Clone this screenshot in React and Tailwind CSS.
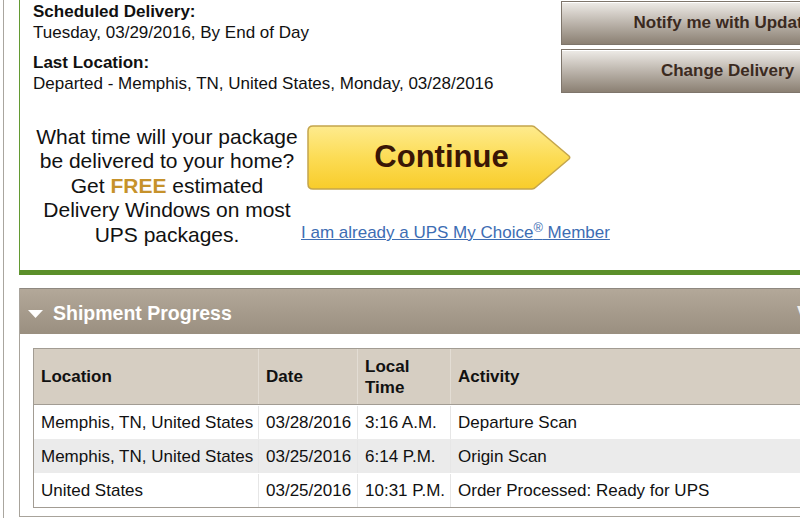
import React from 'react';

const rows = [
    { location: 'Memphis, TN, United States', date: '03/28/2016', time: '3:16 A.M.', activity: 'Departure Scan' },
    { location: 'Memphis, TN, United States', date: '03/25/2016', time: '6:14 P.M.', activity: 'Origin Scan' },
    { location: 'United States', date: '03/25/2016', time: '10:31 P.M.', activity: 'Order Processed: Ready for UPS' },
];

const GrayButton = ({ children }) => (
    <button className="h-[44px] w-full border border-[#7e756b] bg-linear-to-b from-[#efece8] to-[#8b8073] shadow-[inset_0_1px_0_#ffffff] text-[17px] font-bold text-[#3b2a1f] flex items-center justify-center">
        {children}
    </button>
);

const ContinueButton = () => (
    <div className="relative ml-[6px] w-[264px] h-[65px]">
        <svg className="absolute inset-0" width="264" height="65" viewBox="0 0 264 65">
            <defs>
                <linearGradient id="cont" x1="0" y1="0" x2="0" y2="1">
                    <stop offset="0" stopColor="#feeb8e" />
                    <stop offset="0.5" stopColor="#fcdc55" />
                    <stop offset="1" stopColor="#f8cc2a" />
                </linearGradient>
            </defs>
            <path
                d="M6 1 H225 Q227 1 229 3 L262 31 Q263.5 32.5 262 34 L229 62 Q227 64 225 64 H6 Q1 64 1 59 V6 Q1 1 6 1 Z"
                fill="url(#cont)"
                stroke="#c4a54c"
                strokeWidth="1.5"
            />
        </svg>
        <div className="absolute inset-0 flex items-center justify-center pl-[5px] text-[31px] font-bold text-[#3a1606]">
            Continue
        </div>
    </div>
);

export default function App() {
    return (
        <div className="w-[800px] h-[518px] overflow-hidden bg-white text-[#111] font-['Liberation_Sans',Arial,sans-serif]">
            <div className="ml-[3px] h-full w-[1000px] border-l border-[#aaa69f] pl-[15px]">
                {/* Tracking summary */}
                <div className="w-[900px] border-l border-[#639a33] border-b-[5px] border-b-[#5b8f2a] pl-[13px] pt-[1px] pb-[23px]">
                    <div className="flex items-start">
                        <div className="w-[528px] text-[17px] leading-[21px]">
                            <div className="font-bold">Scheduled Delivery:</div>
                            <div>Tuesday, 03/29/2016, By End of Day</div>
                            <div className="mt-[9px] font-bold">Last Location:</div>
                            <div>Departed - Memphis, TN, United States, Monday, 03/28/2016</div>
                        </div>
                        <div className="w-[333px] flex flex-col gap-[4px]">
                            <GrayButton>Notify me with Updates</GrayButton>
                            <GrayButton>Change Delivery</GrayButton>
                        </div>
                    </div>

                    <div className="mt-[31px] flex items-start">
                        <div className="w-[268px] text-center text-[21px] leading-[24.4px]">
                            What time will your package<br />
                            be delivered to your home?<br />
                            Get <span className="font-bold text-[#c6922b]">FREE</span> estimated<br />
                            Delivery Windows on most<br />
                            UPS packages.
                        </div>
                        <div className="flex flex-col items-start">
                            <ContinueButton />
                            <a className="mt-[32px] text-[17px] leading-[21px] text-[#3d6db3] underline whitespace-nowrap">
                                I am already a UPS My Choice<sup>®</sup> Member
                            </a>
                        </div>
                    </div>
                </div>

                {/* Shipment progress */}
                <div className="mt-[13px] w-[900px] border-l border-b border-[#a8a39b] pb-[8px]">
                    <div className="h-[46px] border-t border-[#8e8880] bg-linear-to-b from-[#b3a899] to-[#9a8f80] flex items-center pl-[8px] pt-[4px]">
                        <svg width="15" height="8" viewBox="0 0 15 8" className="mr-[10px]">
                            <path d="M0 0 H15 L7.5 8 Z" fill="#ffffff" />
                        </svg>
                        <div className="w-[744px] text-[19.5px] font-bold text-white">Shipment Progress</div>
                        <div className="text-[19.5px] font-bold text-[#f3efe9]">View</div>
                    </div>

                    <div className="pt-[14px] pl-[13px]">
                        <div className="border border-[#a29c93]">
                            <div className="grid grid-cols-[224px_99px_93px_1fr] h-[56px] bg-[#d6cec2] border-b border-[#a29c93] text-[17px] leading-[21px] font-bold">
                                <div className="flex items-center pl-[7px]">Location</div>
                                <div className="flex items-center pl-[7px] border-l border-[#e3ddd4]">Date</div>
                                <div className="flex items-center pl-[7px] border-l border-[#e3ddd4]">Local<br />Time</div>
                                <div className="flex items-center pl-[7px] border-l border-[#e3ddd4]">Activity</div>
                            </div>
                            {rows.map((r, i) => (
                                <div
                                    key={i}
                                    className={`grid grid-cols-[224px_99px_93px_1fr] h-[34px] pt-[1px] text-[17px] whitespace-nowrap ${i === 1 ? 'bg-[#ebebeb]' : 'bg-white'}`}
                                >
                                    <div className="flex items-center pl-[7px]">{r.location}</div>
                                    <div className="flex items-center pl-[7px] border-l border-[#e6e6e6]">{r.date}</div>
                                    <div className="flex items-center pl-[7px] border-l border-[#e6e6e6]">{r.time}</div>
                                    <div className="flex items-center pl-[7px] border-l border-[#e6e6e6]">{r.activity}</div>
                                </div>
                            ))}
                        </div>
                    </div>
                </div>
            </div>
        </div>
    );
}
